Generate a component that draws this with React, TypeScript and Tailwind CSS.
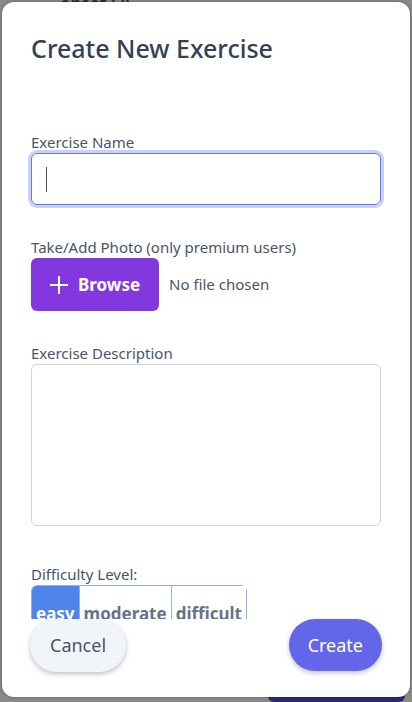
import { useState } from "react";

type Level = "easy" | "moderate" | "difficult";

const levels: Level[] = ["easy", "moderate", "difficult"];

function Field({ label, children }: { label: string; children: React.ReactNode }) {
  return (
    <div className="flex flex-col">
      <label className="text-[15px] leading-5 text-[#475569]">{label}</label>
      <div className="mt-px">{children}</div>
    </div>
  );
}

export default function App() {
  const [level, setLevel] = useState<Level>("easy");

  return (
    <div
      className="relative h-[702px] w-[412px] overflow-hidden bg-[#898989]"
      style={{ fontFamily: '"Segoe UI", "Noto Sans", sans-serif' }}
    >
      {/* page behind the dialog, dimmed */}
      <div className="ml-[60px] -mt-[9px] text-[17px] font-semibold text-[#2b2b2b]">onset (?)</div>
      <div className="absolute bottom-0 left-[268px] h-[6px] w-[137px] rounded-b-[10px] bg-[#2b2970]" />

      <div className="absolute left-[2px] top-[2px] flex h-[695px] w-[408px] flex-col rounded-[12px] bg-white shadow-[0_0_3px_rgba(0,0,0,0.35)]">
        <div className="h-[617px] overflow-hidden px-[29px] pt-[30px]">
          <h2 className="text-[25px] font-medium leading-8 text-[#334155]">Create New Exercise</h2>

          <div className="mt-[68px] flex flex-col gap-[32px]">
            <Field label="Exercise Name">
              <div className="flex h-[52px] items-center rounded-[6px] border border-[#6d72ee] px-[14px] ring-[3px] ring-[#c7d2fe]">
                <span className="h-[25px] w-px bg-[#4b5563]" />
              </div>
            </Field>

            <Field label="Take/Add Photo (only premium users)">
              <div className="flex items-center gap-[10px]">
                <button
                  type="button"
                  className="flex h-[53px] items-center gap-[10px] rounded-[6px] bg-[#8338df] pl-[19px] pr-[19px] text-[17px] font-bold text-white"
                >
                  <svg width="18" height="18" viewBox="0 0 18 18" fill="none" stroke="white" strokeWidth="2">
                    <path d="M9 0v18M0 9h18" />
                  </svg>
                  Browse
                </button>
                <span className="text-[15px] text-[#475569]">No file chosen</span>
              </div>
            </Field>

            <Field label="Exercise Description">
              <div className="h-[162px] rounded-[6px] border border-[#d1d5db]" />
            </Field>
          </div>

          <div className="mt-[38px] flex flex-col">
            <span className="text-[15px] leading-5 text-[#475569]">Difficulty Level:</span>
            <div className="mt-px flex w-fit rounded-t-[6px] border border-b-0 border-[#8fb0f5]">
              {levels.map((l, i) => (
                <button
                  key={l}
                  type="button"
                  onClick={() => setLevel(l)}
                  className={
                    (level === l ? "bg-[#4f84ec] text-white " : "bg-white text-[#64748b] ") +
                    (i > 0 ? "border-l border-[#8fb0f5] " : "") +
                    (i === 0 ? "rounded-tl-[5px] " : "") +
                    "px-[4px] pt-[14px] pb-[10px] text-[17px] font-bold leading-7"
                  }
                >
                  {l}
                </button>
              ))}
            </div>
          </div>
        </div>

        <div className="flex items-start justify-between px-[28px]">
          <button
            type="button"
            className="h-[53px] rounded-full bg-[#f1f5f9] px-[20px] text-[18px] text-[#475569] shadow-[0_2px_5px_rgba(0,0,0,0.25)]"
          >
            Cancel
          </button>
          <button
            type="button"
            className="h-[52px] rounded-full bg-[#6366e8] px-[19px] text-[18px] text-white shadow-[0_2px_5px_rgba(0,0,0,0.25)]"
          >
            Create
          </button>
        </div>
      </div>
    </div>
  );
}
